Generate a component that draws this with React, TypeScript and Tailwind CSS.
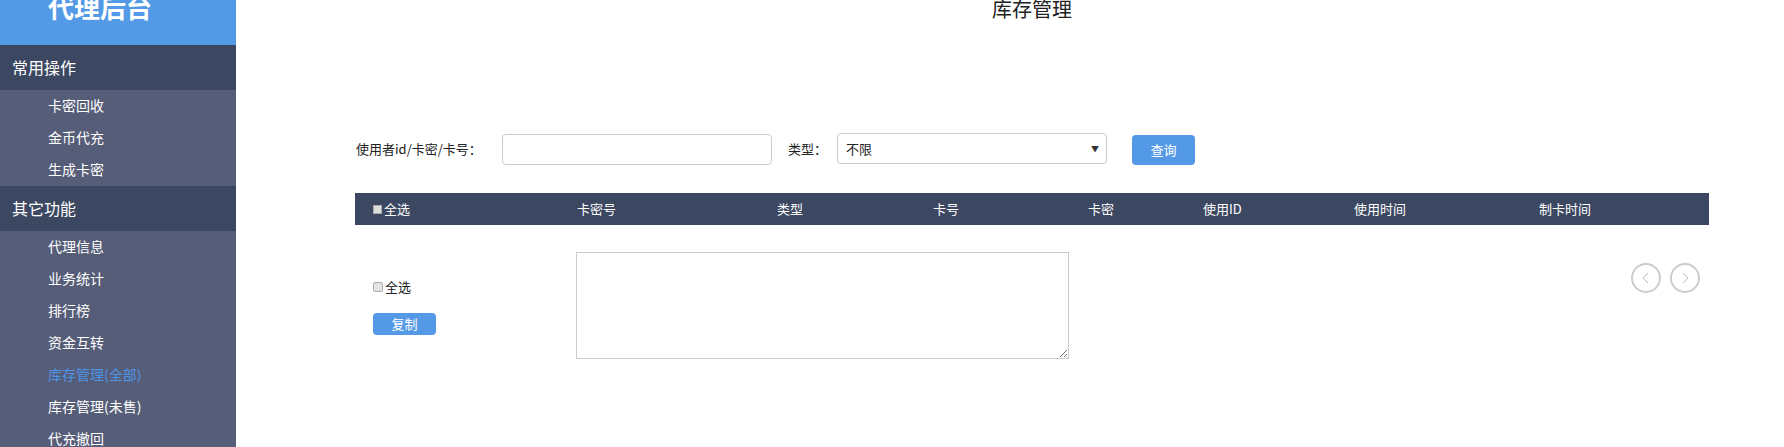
import React from "react";

const F = { fontFamily: '"Noto Sans CJK SC", "Noto Sans", sans-serif' };

function SideItem({ label, active }: { label: string; active?: boolean }) {
  return (
    <div className={`h-[32px] shrink-0 flex items-center pl-[48px] pb-[2px] text-[14px] ${active ? "text-[#4d94e6]" : "text-white"}`}>
      {label}
    </div>
  );
}

function Section({ label }: { label: string }) {
  return (
    <div className="h-[45px] shrink-0 flex items-center pl-[12px] pb-[2px] text-[16px] text-white bg-[#3c4862]">{label}</div>
  );
}

export default function App() {
  const cols = [
    { w: "w-[222px]", label: "全选", cb: true },
    { w: "w-[200px]", label: "卡密号" },
    { w: "w-[156px]", label: "类型" },
    { w: "w-[155px]", label: "卡号" },
    { w: "w-[115px]", label: "卡密" },
    { w: "w-[151px]", label: "使用ID" },
    { w: "w-[185px]", label: "使用时间" },
    { w: "flex-1", label: "制卡时间" },
  ];
  return (
    <div className="h-[447px] w-[1784px] overflow-hidden flex bg-white" style={F}>
      <aside className="w-[236px] shrink-0 h-full bg-[#565d78] flex flex-col overflow-hidden">
        <div className="h-[45px] shrink-0 bg-[#5299e6] overflow-hidden pl-[48px]">
          <div className="text-[26px] leading-none text-white mt-[-6px] font-bold">代理后台</div>
        </div>
        <Section label="常用操作" />
        <SideItem label="卡密回收" />
        <SideItem label="金币代充" />
        <SideItem label="生成卡密" />
        <Section label="其它功能" />
        <SideItem label="代理信息" />
        <SideItem label="业务统计" />
        <SideItem label="排行榜" />
        <SideItem label="资金互转" />
        <SideItem label="库存管理(全部)" active />
        <SideItem label="库存管理(未售)" />
        <SideItem label="代充撤回" />
      </aside>
      <main className="flex-1">
        <div className="ml-[119px] w-[1354px]">
          <div className="text-center text-[20px] leading-none text-[#222] mt-[-1px]">库存管理</div>
          <div className="flex items-center mt-[113px] text-[13px] text-[#222]">
            <span className="ml-[1px] w-[146px] shrink-0">使用者id/卡密/卡号：</span>
            <div className="w-[270px] h-[31px] border border-[#ccc] rounded-[4px] mt-[2px]" />
            <span className="ml-[16px] w-[49px] shrink-0">类型：</span>
            <div className="w-[270px] h-[31px] border border-[#ccc] rounded-[4px] flex items-center justify-between pl-[8px] pr-[7px]">
              <span>不限</span>
              <span className="text-[8px] text-[#333]">▼</span>
            </div>
            <div className="ml-[25px] w-[63px] h-[30px] rounded-[4px] bg-[#5499e6] text-white flex items-center justify-center mt-[2px]">查询</div>
          </div>
          <div className="mt-[28px] h-[32px] bg-[#3c4862] flex items-center text-white text-[13px]">
            {cols.map((c, i) => (
              <div key={i} className={`${c.w} flex items-center ${i === 0 ? "pl-[18px]" : ""}`}>
                {c.cb && <span className="w-[9px] h-[9px] bg-[#ddd] border border-[#aaa] mr-[2px]" />}
                {c.label}
              </div>
            ))}
          </div>
          <div className="flex mt-[27px]">
            <div className="w-[221px] pl-[18px] pt-[25px] text-[13px] text-[#222]">
              <div className="flex items-center">
                <span className="w-[10px] h-[10px] bg-[#e4e4e4] border border-[#aaa] rounded-[2px] mr-[2px]" />
                全选
              </div>
              <div className="mt-[16px] w-[63px] h-[22px] rounded-[4px] bg-[#5499e6] text-white flex items-center justify-center">复制</div>
            </div>
            <textarea className="w-[493px] h-[107px] border border-[#ccc] outline-none" />
            <div className="flex-1 flex justify-end gap-[9px] pr-[9px] pt-[11px]">
              <div className="w-[30px] h-[30px] rounded-full border-2 border-[#ccc] flex items-center justify-center">
                <svg width="12" height="12" viewBox="0 0 12 12"><path d="M8 1 L3 6 L8 11" fill="none" stroke="#bbb" strokeWidth="1" /></svg>
              </div>
              <div className="w-[30px] h-[30px] rounded-full border-2 border-[#ccc] flex items-center justify-center">
                <svg width="12" height="12" viewBox="0 0 12 12"><path d="M4 1 L9 6 L4 11" fill="none" stroke="#bbb" strokeWidth="1" /></svg>
              </div>
            </div>
          </div>
        </div>
      </main>
    </div>
  );
}
